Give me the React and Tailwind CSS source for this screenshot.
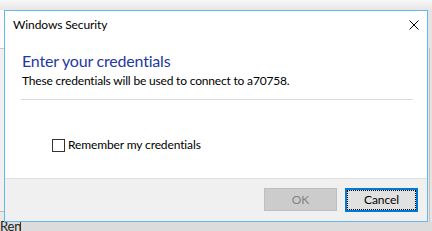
export default function App() {
  const font = { fontFamily: 'Lato, "Liberation Sans", sans-serif' };
  return (
    <div className="w-[432px] h-[231px] relative overflow-hidden bg-[#f0f0f0]" style={font}>
      {/* desktop / background behind the dialog */}
      <div className="absolute left-0 top-0 w-full h-[10px] bg-gradient-to-b from-[#f8f8f8] to-[#e6e6e6]" />
      <div className="absolute left-0 top-[10px] w-[4px] h-[38px] bg-[#fbfbfb]" />
      <div className="absolute left-0 top-[48px] w-[4px] h-px bg-[#c6c6c6]" />
      <div className="absolute left-0 top-[211px] w-[4px] h-px bg-[#bdbdbd]" />
      <div className="absolute left-0 top-[212px] w-[4px] h-[10px] bg-[#e8e8e8]" />
      <div className="absolute right-0 top-[10px] w-[4px] h-[221px] bg-[#e4e4e4]" />
      <div className="absolute left-[429px] top-[48px] w-px h-[183px] bg-[#c4c4c4]" />
      <div className="absolute left-0 top-[222px] w-full h-[9px] bg-[#dcdcdc]" />
      <div className="absolute left-0 top-[218px] text-[13px] leading-[16px] text-[#222] tracking-[-0.2px]">Ren</div>
      <div className="absolute left-[20px] top-[222px] w-px h-[9px] bg-[#333]" />

      {/* dialog window */}
      <div className="relative z-10 ml-[4px] mt-[10px] w-[424px] h-[212px] border border-[#67b6ee] bg-white flex flex-col">
        <div className="flex items-start justify-between pl-[8px] pr-[8px] pt-[6px]">
          <div className="text-[12px] leading-[16px] text-black tracking-[-0.1px]">Windows Security</div>
          <svg width="10" height="10" viewBox="0 0 10 10" className="mt-[3px]">
            <path d="M0.5 0.5 L9.5 9.5 M9.5 0.5 L0.5 9.5" stroke="#000" strokeWidth="1" fill="none" />
          </svg>
        </div>

        <div className="pl-[17px] mt-[18px]">
          <div className="text-[16px] leading-[20px] text-[#1e399f] tracking-[-0.2px]">Enter your credentials</div>
          <div className="mt-[2px] text-[12px] leading-[16px] text-black tracking-[-0.18px]">
            These credentials will be used to connect to a70758.
          </div>
        </div>

        <div className="ml-[16px] mt-[10px] w-[392px] h-px bg-[#dcdcdc]" />

        <div className="mt-[37px] ml-[47px] flex items-start gap-[3px]">
          <div className="mt-[2px] w-[13px] h-[13px] border border-[#333333] bg-white" />
          <div className="text-[12px] leading-[16px] text-black tracking-[-0.12px]">Remember my credentials</div>
        </div>

        <div className="flex-1" />

        <div className="h-[43px] border-t border-[#dfdfdf] bg-[#f0f0f0] flex justify-end items-start pt-[9px] pr-[9px] gap-[8px]">
          <div className="w-[73px] h-[23px] border border-[#bfbfbf] bg-[#cccccc] flex items-center justify-center text-[12px] leading-[16px] text-[#838383]">
            OK
          </div>
          <div className="w-[73px] h-[24px] border-2 border-[#0078d7] bg-[#e1e1e1] flex">
            <div className="flex-1 border border-dotted border-black flex items-center justify-center text-[12px] leading-[16px] text-black tracking-[-0.1px]">
              Cancel
            </div>
          </div>
        </div>
      </div>
    </div>
  );
}
